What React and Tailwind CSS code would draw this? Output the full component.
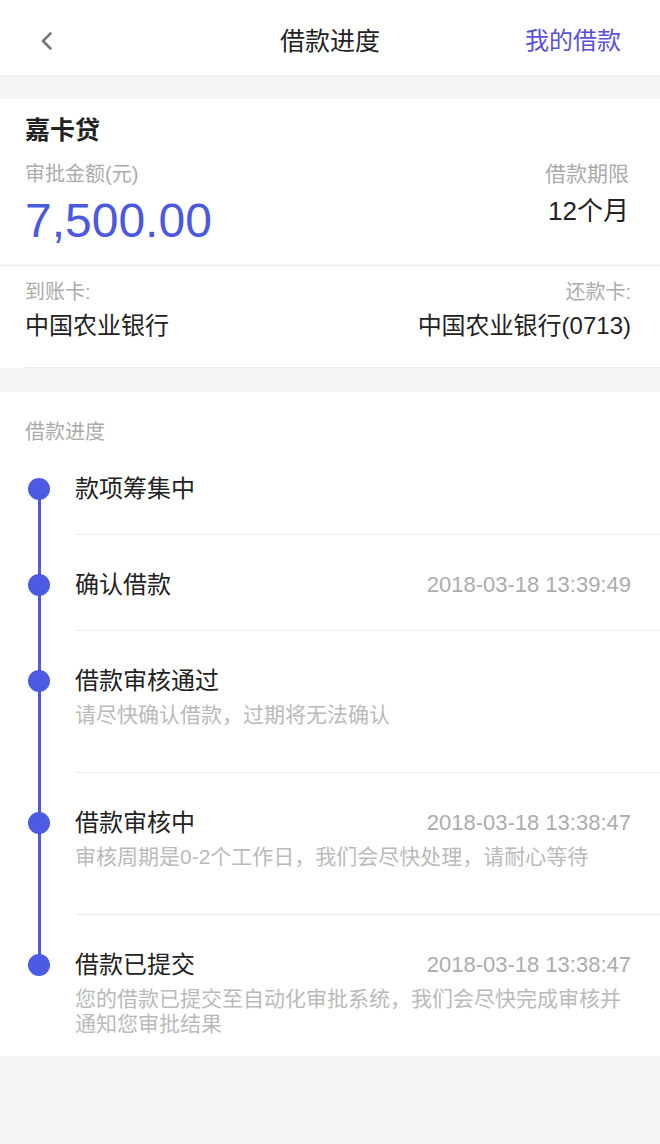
import React from 'react';

const steps = [
  { title: '款项筹集中', time: '', desc: '' },
  { title: '确认借款', time: '2018-03-18 13:39:49', desc: '' },
  { title: '借款审核通过', time: '', desc: '请尽快确认借款，过期将无法确认' },
  { title: '借款审核中', time: '2018-03-18 13:38:47', desc: '审核周期是0-2个工作日，我们会尽快处理，请耐心等待' },
  { title: '借款已提交', time: '2018-03-18 13:38:47', desc: '您的借款已提交至自动化审批系统，我们会尽快完成审核并通知您审批结果' },
];

function Step({ step, first, last }) {
  return (
    <div className="flex">
      <div className="relative w-[75px] shrink-0">
        <div
          className={
            'absolute left-[38px] w-[3px] bg-[#4c5ae6] ' +
            (first ? 'top-[47px] bottom-0' : last ? 'top-0 h-[50px]' : 'top-0 bottom-0')
          }
        />
        <div
          className={
            'absolute left-[28px] w-[22px] h-[22px] rounded-full bg-[#4c5ae6] ' +
            (first ? 'top-[36px]' : 'top-[39px]')
          }
        />
      </div>
      <div
        className={
          'flex-1 pr-[29px] ' +
          (first ? 'pt-[32px] ' : 'pt-[35px] ') +
          (last ? 'pb-[20px]' : step.desc ? 'pb-[45px] border-b border-[#ededed]' : 'pb-[30px] border-b border-[#ededed]')
        }
      >
        <div className="flex items-center justify-between">
          <span className="text-[24px] leading-[30px] text-[#222]">{step.title}</span>
          {step.time && (
            <span className="text-[22px] leading-[30px] text-[#acacac]">{step.time}</span>
          )}
        </div>
        {step.desc && (
          <p className="mt-[6px] text-[21px] leading-[25px] text-[#bababa]">{step.desc}</p>
        )}
      </div>
    </div>
  );
}

export default function App() {
  return (
    <div
      className="w-[660px] min-h-[1144px] bg-[#f5f5f7]"
      style={{ fontFamily: '"Liberation Sans", "Noto Sans CJK SC", sans-serif' }}
    >
      <header className="h-[76px] pt-[6px] bg-white border-b border-[#ececec] grid grid-cols-3 items-center px-[39px]">
        <div className="flex items-center">
          <svg width="14" height="22" viewBox="0 0 14 22">
            <path d="M11.5 3.5 L4 11 L11.5 18.5" fill="none" stroke="#777" strokeWidth="2.6" strokeLinecap="round" strokeLinejoin="round" />
          </svg>
        </div>
        <h1 className="text-center text-[25px] leading-[32px] text-[#222] whitespace-nowrap">借款进度</h1>
        <div className="text-right text-[24px] leading-[32px] text-[#5b50d8] whitespace-nowrap">我的借款</div>
      </header>

      <div className="h-[23px]" />

      <section className="bg-white">
        <div className="px-[25px] pt-[16px] pb-[18px] border-b border-[#ececec] flex justify-between">
          <div>
            <div className="text-[25px] leading-[30px] font-bold text-[#222]">嘉卡贷</div>
            <div className="mt-[16px] text-[20px] leading-[26px] text-[#ababab]">审批金额(元)</div>
            <div className="mt-[8px] text-[48px] leading-[52px] text-[#4b58e0]">7,500.00</div>
          </div>
          <div className="pt-[46px] pr-[6px] text-right">
            <div className="text-[21px] leading-[26px] text-[#ababab]">借款期限</div>
            <div className="mt-[9px] text-[26px] leading-[30px] text-[#222]">12个月</div>
          </div>
        </div>
        <div className="ml-[25px] pr-[29px] pt-[13px] pb-[26px] border-b border-[#ececec] flex justify-between">
          <div>
            <div className="text-[20px] leading-[26px] text-[#ababab]">到账卡:</div>
            <div className="mt-[6px] text-[24px] leading-[30px] text-[#222]">中国农业银行</div>
          </div>
          <div className="text-right">
            <div className="text-[20px] leading-[26px] text-[#ababab]">还款卡:</div>
            <div className="mt-[6px] text-[24px] leading-[30px] text-[#222]">中国农业银行(0713)</div>
          </div>
        </div>
      </section>

      <div className="h-[24px]" />

      <section className="bg-white">
        <div className="px-[25px] pt-[30px] text-[20px] leading-[20px] text-[#ababab]">借款进度</div>
        <div>
          {steps.map((s, i) => (
            <Step key={i} step={s} first={i === 0} last={i === steps.length - 1} />
          ))}
        </div>
      </section>
    </div>
  );
}
